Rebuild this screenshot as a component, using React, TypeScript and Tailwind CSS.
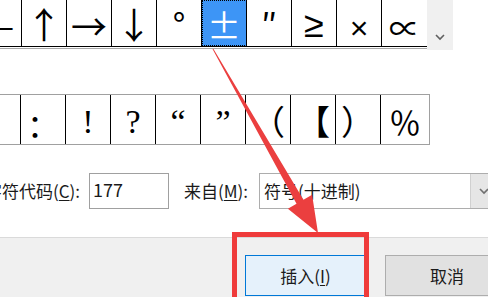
const cjk = '"Noto Sans CJK SC","DejaVu Sans",sans-serif';
const sans = '"Liberation Sans","DejaVu Sans",sans-serif';
const serif = '"Liberation Serif","Noto Sans CJK SC",serif';

const topRow = [
  { ch: '—', cls: 'text-[34px] pt-[4px]' },
  { ch: '↑', cls: 'text-[36px]' },
  { ch: '→', cls: 'text-[36px] pt-[4px]' },
  { ch: '↓', cls: 'text-[36px]' },
  { ch: '°', cls: 'text-[34px] pt-[2px]' },
  { ch: '±', cls: 'text-[34px] pt-[4px]', active: true },
  { ch: '″', cls: 'text-[34px] pt-[2px]' },
  { ch: '≥', cls: 'text-[36px] pt-[4px]', font: sans },
  { ch: '×', cls: 'text-[32px] pt-[9px]', font: sans },
  { ch: '∝', cls: 'text-[31px] pt-[6px]' },
];

const bottomRow = [
  { ch: '', font: serif, cls: 'text-[34px]' },
  { ch: '：', font: cjk, cls: 'text-[32px] pt-[6px]' },
  { ch: '!', font: serif, cls: 'text-[34px] pt-[4px]' },
  { ch: '?', font: serif, cls: 'text-[34px] pt-[4px]' },
  { ch: '“', font: serif, cls: 'text-[34px] pt-[4px]' },
  { ch: '”', font: serif, cls: 'text-[34px] pt-[4px]' },
  { ch: '（', font: cjk, cls: 'text-[34px] pt-[2px]' },
  { ch: '【', font: cjk, cls: 'text-[34px] pt-[2px]' },
  { ch: '）', font: cjk, cls: 'text-[34px] pt-[2px]' },
  { ch: '％', font: cjk, cls: 'text-[32px] pt-[2px]' },
];

function Chevron({ className }: { className: string }) {
  return (
    <svg width="10" height="7" viewBox="0 0 10 7" className={className}>
      <path d="M1 1 L5 5 L9 1" fill="none" stroke="currentColor" strokeWidth="1.6" />
    </svg>
  );
}

export default function App() {
  return (
    <div className="relative w-[488px] h-[297px] overflow-hidden bg-white text-black">
      <div className="h-[237px] flex flex-col">
        {/* top symbol grid */}
        <div className="flex h-[50px]">
          <div className="flex flex-col shrink-0">
            <div className="ml-[-23px] flex h-[47px] border-b border-black" style={{ fontFamily: cjk }}>
              {topRow.map((c, i) => (
                <div
                  key={i}
                  className={`w-[45px] h-full shrink-0 flex justify-center items-center leading-none ${
                    i < topRow.length - 1 ? 'border-r border-black' : ''
                  } ${c.active ? 'bg-[#3d95f6] text-white outline outline-1 outline-dotted outline-black -outline-offset-1' : ''}`}
                  style={c.font ? { fontFamily: c.font } : undefined}
                >
                  <span className={c.cls}>{c.ch}</span>
                </div>
              ))}
            </div>
            <div className="mt-[1px] h-px bg-[#a8a8a8]" />
          </div>
          <div className="w-[26px] h-[50px] shrink-0 bg-[#f0f0f0] flex items-end justify-center pb-[9px]">
            <Chevron className="text-[#606060]" />
          </div>
        </div>

        {/* second symbol row */}
        <div className="mt-[44px] ml-[-24px] w-[454px] h-[51px] flex border-y border-r border-[#a0a0a0]">
          {bottomRow.map((c, i) => (
            <div
              key={i}
              className={`${i === bottomRow.length - 1 ? 'w-[48px]' : 'w-[45px]'} h-full shrink-0 flex justify-center items-center ${
                i < bottomRow.length - 1 ? 'border-r border-black' : ''
              }`}
              style={{ fontFamily: c.font }}
            >
              <span className={`leading-none ${c.cls}`}>{c.ch}</span>
            </div>
          ))}
        </div>

        {/* character code row */}
        <div className="mt-[28px] flex items-center h-[36px] text-[17px] text-[#1a1a1a]" style={{ fontFamily: cjk }}>
          <div className="ml-[-15px] w-[104px] shrink-0 whitespace-nowrap">
            字符代码(<span className="underline underline-offset-2">C</span>):
          </div>
          <div className="w-[80px] h-[36px] shrink-0 border border-[#a0a0a0] pl-[3px] flex items-center text-[18px] leading-none pb-[4px]">
            177
          </div>
          <div className="ml-[15px] w-[75px] shrink-0 whitespace-nowrap">
            来自(<span className="underline underline-offset-2">M</span>):
          </div>
          <div className="w-[240px] h-[36px] shrink-0 border border-[#adadad] flex items-center">
            <span className="pl-[4px] flex-1">符号(十进制)</span>
            <div className="w-[28px] h-[34px] bg-[#e6e6e6] border-l border-[#d0d0d0] flex items-center pl-[8px]">
              <Chevron className="text-[#707070]" />
            </div>
          </div>
        </div>
      </div>

      {/* button bar */}
      <div className="h-[60px] bg-[#f0f0f0] border-t border-[#dadada] pt-[17px] flex text-[17px] text-[#1a1a1a]" style={{ fontFamily: cjk }}>
        <div className="ml-[245px] w-[121px] h-[41px] border border-[#0078d7] bg-[#e5f1fb] flex items-center justify-center shrink-0">
          插入(<span className="underline underline-offset-2">I</span>)
        </div>
        <div className="ml-[19px] w-[124px] h-[41px] border border-[#adadad] bg-[#e1e1e1] flex items-center justify-center shrink-0">
          取消
        </div>
      </div>

      {/* annotation overlays */}
      <div className="absolute left-[232px] top-[232px] w-[137px] h-[70px] border-[5px] border-[#ef3b3b]" />
      <svg className="absolute left-0 top-0" width="488" height="297" viewBox="0 0 488 297">
        <polygon
          points="212.5,49 213.5,49 303.5,199.8 312.1,194.8 318,233 287.9,208.8 296.5,203.8"
          fill="#eb3f3f"
        />
      </svg>
    </div>
  );
}
